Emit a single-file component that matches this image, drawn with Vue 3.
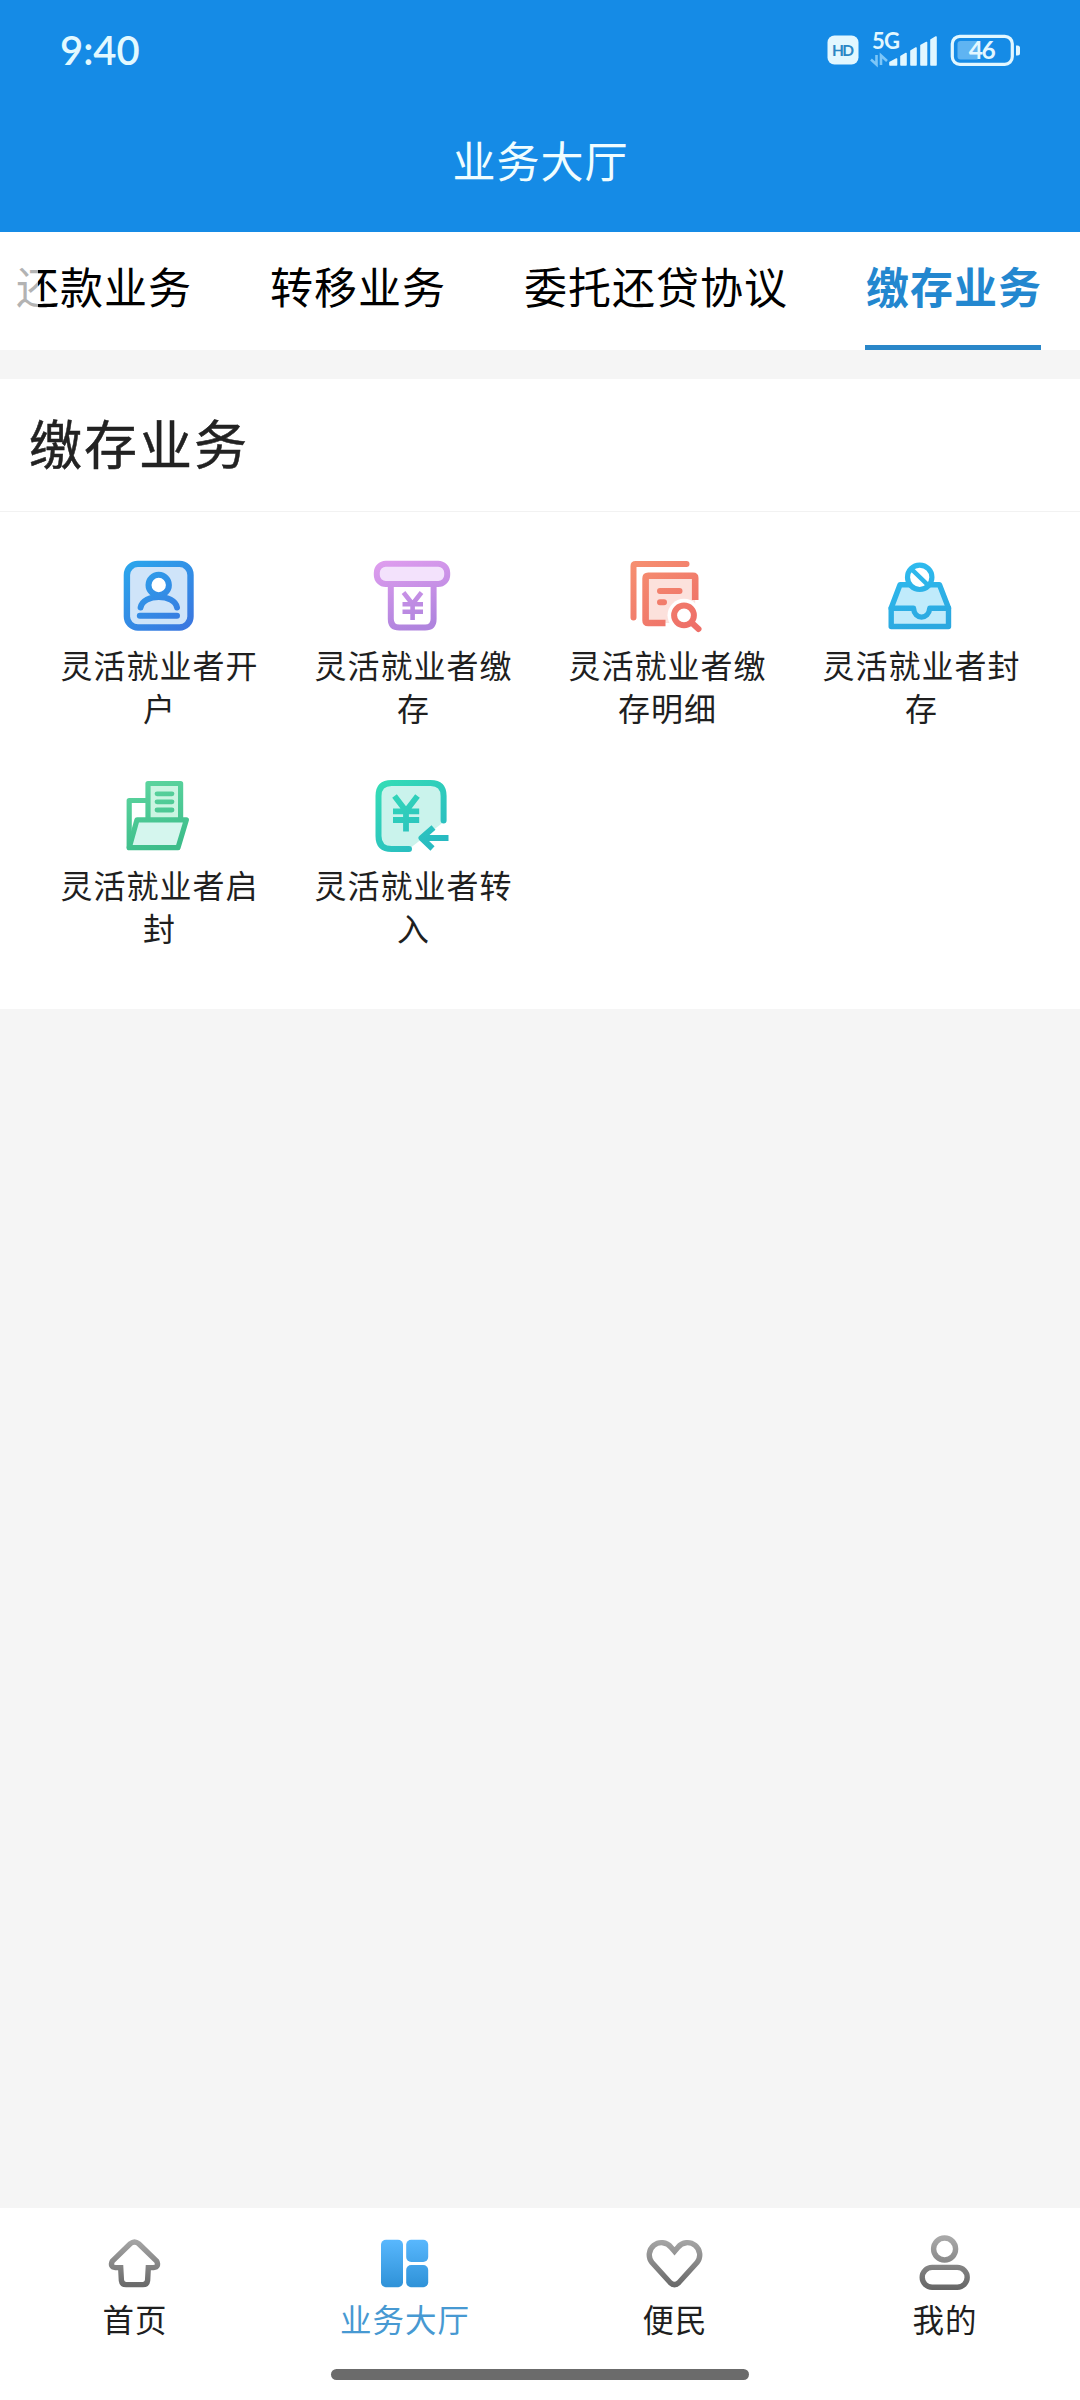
<template>
  <div class="page">
    <header class="header">
      <div class="status-bar">
        <span class="time">9:40</span>
        <svg class="status-icons" width="196" height="56" viewBox="0 -8 196 56">
          <!-- HD badge -->
          <rect x="1.5" y="5.5" width="31" height="29" rx="7" fill="#e2f7ff" />
          <text class="status-text" x="17" y="25.5" font-size="15.5" textLength="22" text-anchor="middle" fill="#2b86c4">HD</text>
          <!-- network -->
          <text class="status-text" x="46" y="18.5" font-size="22" textLength="28" fill="#e2f7ff">5G</text>
          <path d="M45 29.5L50.5 34.5V25M55 35V25.5L61 31" fill="none" stroke="#7cc6f8" stroke-width="2.6" />
          <g fill="#e2f7ff" stroke="#e2f7ff" stroke-width="1.6" stroke-linejoin="round">
            <path d="M64 35V32.5L70.5 29V35Z" />
            <path d="M75 35V26.5L80 23.5V35Z" />
            <path d="M85 35V21L90 18V35Z" />
            <path d="M95 35V15.5L100.5 12.5V35Z" />
            <path d="M105 35V10L110 7V35Z" />
          </g>
          <!-- battery -->
          <rect x="126.3" y="6.3" width="60" height="28" rx="7.5" fill="none" stroke="#e2f7ff" stroke-width="3.2" />
          <rect x="131.5" y="11" width="22" height="18.5" rx="3" fill="#5fb4f2" />
          <path d="M190 15.5h1.5q2.5 0 2.5 2.5v5q0 2.5-2.5 2.5H190Z" fill="#e2f7ff" />
          <text class="status-text" x="156.3" y="29.3" font-size="24.5" textLength="27" text-anchor="middle" fill="#e2f7ff">46</text>
        </svg>
      </div>
      <h1 class="title">业务大厅</h1>
    </header>

    <nav class="tabs">
      <div
        v-for="tab in tabs"
        :key="tab"
        class="tab"
        :class="{ active: tab === activeTab }"
        @click="activeTab = tab"
      >
        {{ tab }}
      </div>
    </nav>

    <section class="card">
      <h2 class="card-title">缴存业务</h2>
      <div class="grid">
        <div v-for="item in services" :key="item.icon" class="service">
          <svg class="service-icon" width="80" height="80" viewBox="0 0 80 80">
            <defs>
              <linearGradient :id="'g-' + item.icon" gradientUnits="userSpaceOnUse" x1="10" y1="5" :x2="item.slant" y2="75">
                <stop offset="0" :stop-color="item.from" />
                <stop offset="1" :stop-color="item.to" />
              </linearGradient>
            </defs>
            <g fill="none" :stroke="`url(#g-${item.icon})`" stroke-width="6" stroke-linecap="round" stroke-linejoin="round">
              <template v-if="item.icon === 'account'">
                <rect x="7.9" y="7.9" width="63.6" height="63.6" rx="11" :fill="item.tint" stroke-width="6.4" />
                <path d="M21.6 51.5C24 37.5 55.5 37.5 58 51.5" />
                <circle cx="39.7" cy="29" r="10.2" fill="#fff" />
                <path d="M20.8 59.8H58" />
              </template>
              <template v-else-if="item.icon === 'deposit'">
                <path d="M17.8 28V63q0 8.5 8.5 8.5h25.8q8.5 0 8.5-8.5V28" fill="#fff" />
                <rect x="3.8" y="7.8" width="70.4" height="20.2" rx="9" :fill="item.tint" />
                <path d="M30.5 36.5L39.5 48L48.5 36.5M29.5 48.3H50M29.5 55.8H50M39.6 48V64" stroke-width="4.6" stroke-linecap="butt" />
              </template>
              <template v-else-if="item.icon === 'detail'">
                <path d="M6.5 61.5V10Q6.5 7.9 8.8 7.9H59.5" />
                <path d="M68.2 43V22Q68.2 19.8 66 19.8H21.2Q18.6 19.8 18.6 22.5V64.5Q18.6 67 21.2 67H38" :fill="item.tint" stroke="none" />
                <path d="M38 67H68.2V43Z" :fill="item.tint" stroke="none" />
                <circle cx="57" cy="59.3" r="16.5" fill="#fff" stroke="none" />
                <path d="M56 68.5H69.5V47Z" fill="#fff" stroke="none" />
                <path d="M68.2 44V22Q68.2 19.8 66 19.8H21.2Q18.6 19.8 18.6 22.5V64.5Q18.6 67 21.2 67H38.5" stroke-width="6.6" stroke-linecap="butt" />
                <path d="M33 35H52.5M33 46.3H37" />
                <circle cx="57" cy="59.3" r="9.9" />
                <path d="M65 67L71.5 73" />
              </template>
              <template v-else-if="item.icon === 'seal'">
                <path d="M19 28.8H58.5L67.5 52V70.5H10.2V52Z" :fill="item.tint" stroke-width="5.4" />
                <path d="M10.2 52.3H32.5C33.5 64 47.5 64 48.8 52.3H67.5" stroke-width="5.4" />
                <circle cx="38.7" cy="21.3" r="12.2" fill="#fff" stroke-width="5.2" />
                <path d="M30.5 13.2L47 29.2" stroke-width="4.4" />
              </template>
              <template v-else-if="item.icon === 'unseal'">
                <path d="M29 24.5H10.2V71" stroke-width="5.2" />
                <path d="M29 44V7.5H61.6V44" :fill="item.tint" stroke-width="5.2" />
                <path d="M38 17.8H53M38 25.8H53M38 34H53" stroke-width="4.8" />
                <path d="M18 43.8H67.4L59 71.7H10.2Z" fill="#d5f6ee" stroke-width="5.2" />
              </template>
              <template v-else>
                <path d="M70.6 46V20Q70.6 7 57.6 7H18.5Q5.5 7 5.5 20V60Q5.5 73 18.5 73H36Z" :fill="item.tint" stroke="none" />
                <path d="M70.6 44.5V20Q70.6 7 57.6 7H18.5Q5.5 7 5.5 20V60Q5.5 73 18.5 73H36" />
                <path d="M21.5 20L33 35L44.5 20M20 35.3H46.2M20 44H46.2M33 34V55.5" stroke-linecap="butt" stroke-width="5.8" />
                <path d="M60.5 51.5L48.5 62L59.5 72.5M49 62H75.5" stroke-linecap="butt" />
              </template>
            </g>
          </svg>
          <span class="service-name">{{ item.name }}</span>
        </div>
      </div>
    </section>

    <footer class="bottom-nav">
      <svg class="nav-defs" width="0" height="0">
        <defs>
          <linearGradient id="nav-gray" gradientUnits="userSpaceOnUse" x1="0" y1="5" x2="0" y2="56">
            <stop offset="0" stop-color="#a8a8a8" />
            <stop offset="1" stop-color="#666" />
          </linearGradient>
          <linearGradient id="nav-blue" gradientUnits="userSpaceOnUse" x1="0" y1="6" x2="0" y2="54">
            <stop offset="0" stop-color="#59b8fe" />
            <stop offset="1" stop-color="#2f92d8" />
          </linearGradient>
        </defs>
      </svg>
      <div class="nav-items">
        <div v-for="item in navItems" :key="item.icon" class="nav-item" :class="{ active: item.icon === 'hall' }">
          <svg width="60" height="60" viewBox="0 0 60 60" fill="none" stroke="url(#nav-gray)" stroke-width="5.4">
            <path
              v-if="item.icon === 'home'"
              d="M25.2 10.8Q29.5 7.2 33.8 10.8L51.6 28Q54.5 34 48.5 34.6H43.3L42.6 47.5Q42 51.6 38 51.6H21Q17 51.6 16.4 47.5L15.7 34.6H10.5Q4.5 34 7.4 28Z"
            />
            <g v-else-if="item.icon === 'hall'" fill="url(#nav-blue)" stroke="none">
              <rect x="6" y="6.7" width="22" height="47.6" rx="5" />
              <rect x="31.2" y="6.7" width="22" height="22.3" rx="5" />
              <rect x="31.2" y="32" width="22" height="22.3" rx="5" />
            </g>
            <path
              v-else-if="item.icon === 'heart'"
              d="M29.5 18.3L26 14.2A12.2 12.2 0 0 0 7 29.6L25.3 49.7Q29.5 53.6 33.7 49.7L52 29.6A12.2 12.2 0 0 0 33 14.2Z"
            />
            <template v-else>
              <circle cx="29.6" cy="16" r="11" />
              <rect x="7.2" y="34.4" width="45" height="19.8" rx="9.9" />
            </template>
          </svg>
          <span class="nav-label">{{ item.label }}</span>
        </div>
      </div>
      <div class="home-indicator"></div>
    </footer>
  </div>
</template>

<script setup>
import { ref } from 'vue'

const tabs = ['还款业务', '转移业务', '委托还贷协议', '缴存业务']
const activeTab = ref('缴存业务')

const services = [
  { icon: 'account', name: '灵活就业者开户', from: '#2ba6ec', to: '#3a78e0', tint: '#cfe4f9', slant: 60 },
  { icon: 'deposit', name: '灵活就业者缴存', from: '#de9dee', to: '#b084de', tint: '#f3e2fc', slant: 30 },
  { icon: 'detail', name: '灵活就业者缴存明细', from: '#f68f70', to: '#ee6f68', tint: '#fce1dc', slant: 60 },
  { icon: 'seal', name: '灵活就业者封存', from: '#2fbdf0', to: '#2ba8e0', tint: '#c0ebfb', slant: 30 },
  { icon: 'unseal', name: '灵活就业者启封', from: '#5ed6a0', to: '#3dbd8a', tint: '#cbf5e2', slant: 30 },
  { icon: 'transfer', name: '灵活就业者转入', from: '#34dcb6', to: '#28b9c2', tint: '#caf3ec', slant: 60 }
]

const navItems = [
  { icon: 'home', label: '首页' },
  { icon: 'hall', label: '业务大厅' },
  { icon: 'heart', label: '便民' },
  { icon: 'mine', label: '我的' }
]
</script>

<style>
body {
  margin: 0;
  background: #f5f5f5;
}
</style>

<style scoped>
.page {
  display: flex;
  flex-direction: column;
  width: 1080px;
  height: 2400px;
  overflow: hidden;
  background: #f5f5f5;
  color: #1f1f1f;
  font-family: 'Noto Sans CJK SC', sans-serif;
  letter-spacing: 1px;
}

.header {
  height: 232px;
  flex-shrink: 0;
  background: #158be6;
}

.status-bar {
  display: flex;
  align-items: center;
  justify-content: space-between;
  height: 100px;
  padding: 0 58px 0 60px;
}

.time {
  color: #e2f9ff;
  font-family: Lato, sans-serif;
  font-size: 40px;
  font-weight: 600;
  letter-spacing: 0;
}

.status-text {
  font-family: Lato, sans-serif;
  font-weight: 700;
  letter-spacing: 0;
}

.title {
  margin: 0;
  padding-left: 1px;
  color: #f0fdff;
  font-size: 43px;
  font-weight: 400;
  line-height: 119px;
  text-align: center;
}

.tabs {
  position: relative;
  display: flex;
  justify-content: flex-end;
  height: 118px;
  flex-shrink: 0;
  gap: 77px;
  padding-right: 39px;
  background: #fff;
}

/* fade over the scrolled-out edge */
.tabs::before {
  content: '';
  position: absolute;
  top: 0;
  left: 0;
  z-index: 1;
  width: 38px;
  height: 100%;
  background: rgba(255, 255, 255, 0.7);
}

.tab {
  box-sizing: border-box;
  height: 118px;
  border-bottom: 5px solid transparent;
  color: #000;
  font-size: 43px;
  line-height: 107px;
  text-indent: 1px;
  white-space: nowrap;
}

.tab.active {
  width: 176px;
  border-bottom-color: #2a87c9;
  color: #2387cf;
  font-weight: 700;
}

.card {
  height: 630px;
  flex-shrink: 0;
  margin-top: 29px;
  background: #fff;
}

.card-title {
  height: 132px;
  margin: 0;
  padding-left: 29px;
  border-bottom: 1px solid #f2f2f2;
  color: #222;
  font-size: 53px;
  font-weight: 400;
  line-height: 126px;
  letter-spacing: 2px;
  -webkit-text-stroke: 0.5px #222;
}

.grid {
  display: grid;
  grid-template-columns: repeat(4, 254px);
  grid-auto-rows: 220px;
  justify-content: center;
  padding-top: 44px;
}

.service {
  display: flex;
  flex-direction: column;
  align-items: center;
  padding: 0 24px;
}

.service-icon {
  flex-shrink: 0;
}

.service-name {
  margin-top: 7px;
  padding-left: 1px;
  font-size: 32px;
  line-height: 42.6px;
  text-align: center;
}

.bottom-nav {
  display: flex;
  flex-direction: column;
  align-items: center;
  height: 192px;
  flex-shrink: 0;
  margin-top: auto;
  background: #fff;
}

.nav-defs {
  position: absolute;
}

.nav-items {
  display: grid;
  grid-template-columns: repeat(4, 270px);
  height: 161px;
}

.nav-item {
  display: flex;
  flex-direction: column;
  align-items: center;
  padding-top: 25px;
}

.nav-label {
  margin-top: 3px;
  font-size: 31.5px;
  line-height: 44px;
}

.nav-item.active .nav-label {
  color: #4799d2;
}

.home-indicator {
  width: 418px;
  height: 11px;
  border-radius: 6px;
  background: #6b6b6b;
}
</style>
